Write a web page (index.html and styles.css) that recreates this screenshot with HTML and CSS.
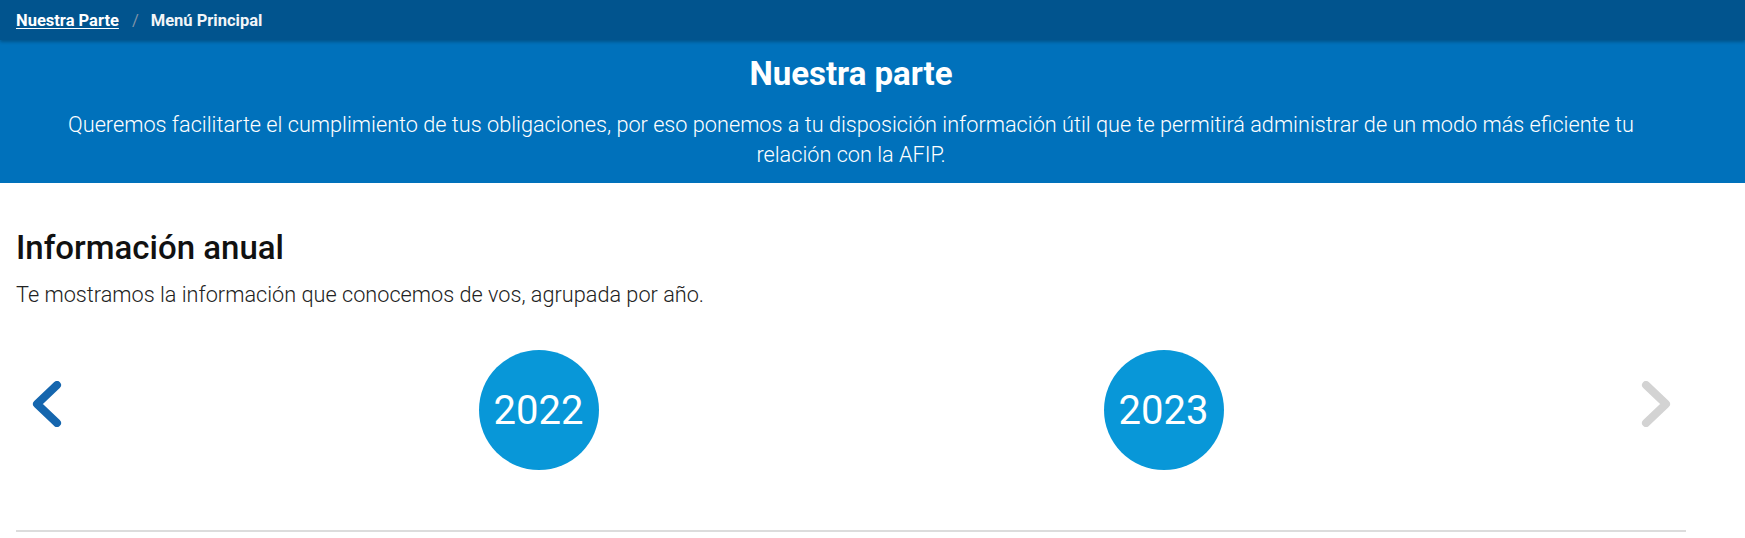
FILE: index.html
```html
<!DOCTYPE html>
<html lang="es">
<head>
<meta charset="utf-8">
<title>Nuestra parte</title>
<link rel="stylesheet" href="styles.css">
</head>
<body>
<nav class="topbar">
  <a class="crumb-link" href="#">Nuestra Parte</a>
  <span class="crumb-sep">/</span>
  <span class="crumb-current">Menú Principal</span>
</nav>
<header class="banner">
  <div class="banner-inner">
    <h1 class="banner-title">Nuestra parte</h1>
    <p class="banner-text">Queremos facilitarte el cumplimiento de tus obligaciones, por eso ponemos a tu disposición información útil que te permitirá administrar de un modo más eficiente tu relación con la AFIP.</p>
  </div>
</header>
<main class="main">
  <h2 class="section-title">Información anual</h2>
  <p class="section-text">Te mostramos la información que conocemos de vos, agrupada por año.</p>
  <div class="carousel">
    <button class="arrow arrow-prev" aria-label="Anterior">
      <svg width="31" height="46" viewBox="0 0 31 46"><polyline points="26,4 6,23 26,42" fill="none" stroke="#1566ae" stroke-width="8" stroke-linecap="round" stroke-linejoin="round"/></svg>
    </button>
    <div class="track">
      <div class="slide"><a class="year" href="#">2022</a></div>
      <div class="slide"><a class="year" href="#">2023</a></div>
    </div>
    <button class="arrow arrow-next" aria-label="Siguiente">
      <svg width="31" height="46" viewBox="0 0 31 46"><polyline points="5,4 25,23 5,42" fill="none" stroke="#d3d3d3" stroke-width="8" stroke-linecap="round" stroke-linejoin="round"/></svg>
    </button>
  </div>
  <hr class="divider">
</main>
</body>
</html>
```
FILE: styles.css
```css
* { box-sizing: border-box; }
html, body { margin: 0; padding: 0; background: #fff; }
body { font-family: Roboto, "Noto Sans", "Liberation Sans", sans-serif; color: #222; }

.topbar {
  height: 40px;
  background: #01548e;
  display: flex;
  align-items: center;
  padding-left: 16px;
  font-size: 16.5px;
  font-weight: 700;
  position: relative;
  z-index: 2;
  box-shadow: 0 2px 3px rgba(0, 0, 0, 0.25);
}
.crumb-link { color: #fff; text-decoration: underline; text-underline-offset: 2px; }
.crumb-sep { color: #7f93a8; font-weight: 400; padding: 0 12px 0 13px; }
.crumb-current { color: #f2f5f8; }

.banner {
  background: #0071bb;
  color: #fff;
}
.banner-inner {
  width: 1702px;
  padding: 14px 0 13px;
  text-align: center;
}
.banner-title {
  margin: 0 0 16px;
  font-size: 33px;
  line-height: 40px;
  font-weight: 700;
}
.banner-text {
  margin: 0 auto;
  max-width: 1620px;
  font-size: 21.7px;
  line-height: 30px;
  font-weight: 300;
}

.main { width: 1702px; padding: 0 16px; }
.section-title {
  margin: 45px 0 12px;
  font-size: 33px;
  line-height: 40px;
  font-weight: 500;
  color: #111;
}
.section-text {
  margin: 0;
  font-size: 21.7px;
  line-height: 30px;
  font-weight: 300;
  color: #222;
}

.carousel {
  margin-top: 40px;
  display: flex;
  align-items: flex-start;
}
.arrow {
  width: 60px;
  height: 46px;
  margin-top: 31px;
  padding: 0;
  border: 0;
  background: none;
  display: flex;
  justify-content: center;
  align-items: center;
}
.track {
  flex: 1;
  display: flex;
  justify-content: center;
}
.slide {
  width: 625px;
  display: flex;
  justify-content: center;
}
.year {
  width: 120px;
  height: 120px;
  border-radius: 50%;
  background: #0897d8;
  color: #fff;
  font-size: 40px;
  font-weight: 400;
  text-decoration: none;
  display: flex;
  align-items: center;
  justify-content: center;
}
.divider {
  margin: 60px 0 0;
  border: 0;
  height: 2px;
  background: #dcdcdc;
}
```
